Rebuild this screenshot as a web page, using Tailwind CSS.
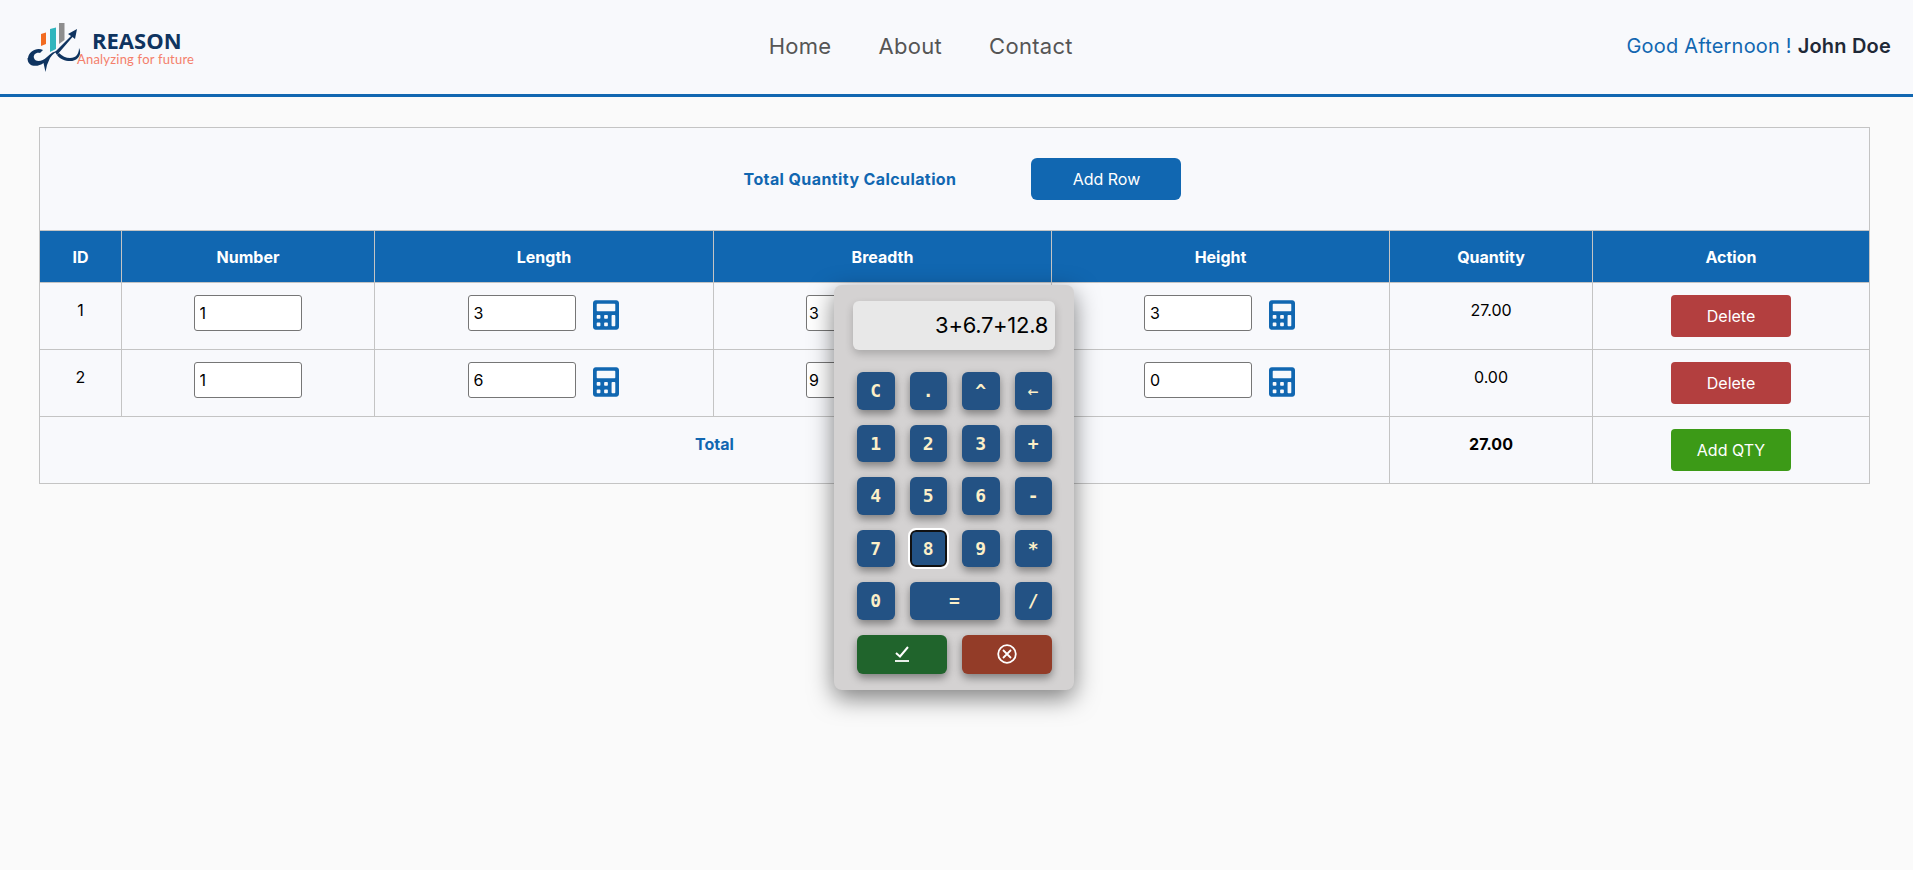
<!DOCTYPE html>
<html lang="en">
<head>
<meta charset="utf-8">
<title>Total Quantity Calculation</title>
<script src="https://cdn.jsdelivr.net/npm/@tailwindcss/browser@4"></script>
</head>
<body class="relative h-[870px] overflow-hidden bg-[#fafafa] font-['Inter',sans-serif] text-black">
<header class="h-[97px] bg-[#f8f9fc] border-b-[3px] border-[#1167b1] flex items-center justify-between pl-[27px] pr-[22px] pb-[2px]">
  <div class="flex items-start w-[300px]">
    <svg class="w-[54px] h-[50px] mt-[1px] shrink-0" viewBox="0 0 54 50">
      <path d="M14 12l5-1.500V22l-5 2z" fill="#f26b21"/>
      <path d="M23 7l6-1.500V27l-6 3z" fill="#2fb5bd"/>
      <path d="M32 1h5.500V18l-5.500 4z" fill="#8e8e8e"/>
      <path d="M28 30L44 14l-3-2 9-5-2 10-2.500-2L30 33z" fill="#0f3460"/>
      <path d="M1 36c1-7 9-11 15-8l-3 3c-4-1-7 2-6 5 1 4 8 4 13-1 4-4 7-6 11-6-3 1-5 3-8 7l-3 7 -1.500 7-2-9c-5 4-16 5-16-5z" fill="#0f3460"/>
      <path d="M52 26c3 5 0 13-9 13-5 0-10-2-13-6l2-2c3 3 7 5 11 5 6 0 9-4 9-10z" fill="#0f3460"/>
    </svg>
    <div class="mt-[7px] -ml-[4px] leading-none">
      <div class="pl-[15px] font-['Open_Sans',sans-serif] font-bold text-[22px] leading-[24px] text-[#0f3460]">REASON</div>
      <div class="-mt-[1px] font-['Lato',sans-serif] text-[13px] leading-[16px] tracking-[0.2px] text-[#f47f6b]">Analyzing for future</div>
    </div>
  </div>
  <nav class="flex gap-[47px] text-[22px] text-[#555555] tracking-[0.3px] ml-[-112px]">
    <a>Home</a><a>About</a><a>Contact</a>
  </nav>
  <div class="text-[20px] tracking-[0.2px] text-[#1167b1] whitespace-nowrap">Good Afternoon ! <span class="font-semibold text-[#1f2937]">John Doe</span></div>
</header>

<main class="pt-[30px] px-[39px]">
  <table class="table-fixed w-[1830px] border-collapse border border-[#c4c4c4] bg-[#f8f9fc] text-[16px]">
    <colgroup>
      <col class="w-[82px]"><col class="w-[253px]"><col class="w-[339px]"><col class="w-[338px]"><col class="w-[338px]"><col class="w-[203px]"><col class="w-[277px]">
    </colgroup>
    <thead>
      <tr class="h-[103px]">
        <th colspan="7" class="border border-[#c4c4c4] font-normal">
          <div class="flex items-center justify-center gap-[75px] pl-[16px]">
            <span class="font-bold text-[16px] tracking-[0.4px] text-[#1167b1]">Total Quantity Calculation</span>
            <button class="w-[150px] h-[42px] rounded-[6px] bg-[#1167b1] text-white text-[16px]">Add Row</button>
          </div>
        </th>
      </tr>
      <tr class="h-[52px] bg-[#1167b1] text-white text-[16px]">
        <th class="border border-[#c4c4c4] font-bold">ID</th>
        <th class="border border-[#c4c4c4] font-bold">Number</th>
        <th class="border border-[#c4c4c4] font-bold">Length</th>
        <th class="border border-[#c4c4c4] font-bold">Breadth</th>
        <th class="border border-[#c4c4c4] font-bold">Height</th>
        <th class="border border-[#c4c4c4] font-bold">Quantity</th>
        <th class="border border-[#c4c4c4] font-bold">Action</th>
      </tr>
    </thead>
    <tbody>
      <tr class="h-[67px] align-top text-center">
        <td class="border border-[#c4c4c4] pt-[15px]">1</td>
        <td class="border border-[#c4c4c4] pt-[12px]"><input value="1" class="w-[108px] h-[36px] bg-white border border-[#767676] rounded-[3px] px-[5px] -ml-[1px]"></td>
        <td class="border border-[#c4c4c4] pt-[12px]">
          <div class="flex items-center justify-center gap-[17px] pr-[2px]"><input value="3" class="w-[108px] h-[36px] bg-white border border-[#767676] rounded-[3px] px-[5px]"><svg class="w-[26px] h-[30px] mt-[3px]" viewBox="0 0 448 512" fill="#1167b1"><path d="M400 0H48C22.400 0 0 22.400 0 48v416c0 25.600 22.400 48 48 48h352c25.600 0 48-22.400 48-48V48C448 22.400 425.600 0 400 0zM128 435c0 6.400-6.400 12.800-12.800 12.800H76.800c-6.400 0-12.800-6.400-12.800-12.800v-38.400c0-6.400 6.400-12.800 12.800-12.800h38.400c6.400 0 12.800 6.400 12.800 12.800V435zm0-128c0 6.400-6.400 12.800-12.800 12.800H76.800c-6.400 0-12.800-6.400-12.800-12.800v-38.400c0-6.400 6.400-12.800 12.800-12.800h38.400c6.400 0 12.800 6.400 12.800 12.800V307zm128 128c0 6.400-6.400 12.800-12.800 12.800h-38.400c-6.400 0-12.800-6.400-12.800-12.800v-38.400c0-6.400 6.400-12.800 12.800-12.800h38.400c6.400 0 12.800 6.400 12.800 12.800V435zm0-128c0 6.400-6.400 12.800-12.800 12.800h-38.400c-6.400 0-12.800-6.400-12.800-12.800v-38.400c0-6.400 6.400-12.800 12.800-12.800h38.400c6.400 0 12.800 6.400 12.800 12.800V307zm128 128c0 6.400-6.400 12.800-12.800 12.800h-38.400c-6.400 0-12.800-6.400-12.800-12.800V268.800c0-6.400 6.400-12.800 12.800-12.800h38.400c6.400 0 12.800 6.400 12.800 12.800V435zm0-256c0 6.400-6.400 12.800-12.800 12.800H76.800c-6.400 0-12.800-6.400-12.800-12.800V76.800C64 70.400 70.400 64 76.800 64h294.400c6.400 0 12.800 6.400 12.800 12.800V179z"/></svg></div>
        </td>
        <td class="border border-[#c4c4c4] pt-[12px]">
          <div class="flex items-center justify-center gap-[17px] pr-[2px]"><input value="3" class="w-[108px] h-[36px] bg-white border border-[#767676] rounded-[3px] px-[2px]"><svg class="w-[26px] h-[30px] mt-[3px]" viewBox="0 0 448 512" fill="#1167b1"><path d="M400 0H48C22.400 0 0 22.400 0 48v416c0 25.600 22.400 48 48 48h352c25.600 0 48-22.400 48-48V48C448 22.400 425.600 0 400 0z"/></svg></div>
        </td>
        <td class="border border-[#c4c4c4] pt-[12px]">
          <div class="flex items-center justify-center gap-[17px] pr-[2px]"><input value="3" class="w-[108px] h-[36px] bg-white border border-[#767676] rounded-[3px] px-[5px]"><svg class="w-[26px] h-[30px] mt-[3px]" viewBox="0 0 448 512" fill="#1167b1"><path d="M400 0H48C22.400 0 0 22.400 0 48v416c0 25.600 22.400 48 48 48h352c25.600 0 48-22.400 48-48V48C448 22.400 425.600 0 400 0zM128 435c0 6.400-6.400 12.800-12.800 12.800H76.800c-6.400 0-12.800-6.400-12.800-12.800v-38.400c0-6.400 6.400-12.800 12.800-12.800h38.400c6.400 0 12.800 6.400 12.800 12.800V435zm0-128c0 6.400-6.400 12.800-12.800 12.800H76.800c-6.400 0-12.800-6.400-12.800-12.800v-38.400c0-6.400 6.400-12.800 12.800-12.800h38.400c6.400 0 12.800 6.400 12.800 12.800V307zm128 128c0 6.400-6.400 12.800-12.800 12.800h-38.400c-6.400 0-12.800-6.400-12.800-12.800v-38.400c0-6.400 6.400-12.800 12.800-12.800h38.400c6.400 0 12.800 6.400 12.800 12.800V435zm0-128c0 6.400-6.400 12.800-12.800 12.800h-38.400c-6.400 0-12.800-6.400-12.800-12.800v-38.400c0-6.400 6.400-12.800 12.800-12.800h38.400c6.400 0 12.800 6.400 12.800 12.800V307zm128 128c0 6.400-6.400 12.800-12.800 12.800h-38.400c-6.400 0-12.800-6.400-12.800-12.800V268.800c0-6.400 6.400-12.800 12.800-12.800h38.400c6.400 0 12.800 6.400 12.800 12.800V435zm0-256c0 6.400-6.400 12.800-12.800 12.800H76.800c-6.400 0-12.800-6.400-12.800-12.800V76.800C64 70.400 70.400 64 76.800 64h294.400c6.400 0 12.800 6.400 12.800 12.800V179z"/></svg></div>
        </td>
        <td class="border border-[#c4c4c4] pt-[15px]">27.00</td>
        <td class="border border-[#c4c4c4] pt-[12px]"><button class="w-[120px] h-[42px] rounded-[4px] bg-[#b33f3f] text-white text-[16px]">Delete</button></td>
      </tr>
      <tr class="h-[67px] align-top text-center">
        <td class="border border-[#c4c4c4] pt-[15px]">2</td>
        <td class="border border-[#c4c4c4] pt-[12px]"><input value="1" class="w-[108px] h-[36px] bg-white border border-[#767676] rounded-[3px] px-[5px] -ml-[1px]"></td>
        <td class="border border-[#c4c4c4] pt-[12px]">
          <div class="flex items-center justify-center gap-[17px] pr-[2px]"><input value="6" class="w-[108px] h-[36px] bg-white border border-[#767676] rounded-[3px] px-[5px]"><svg class="w-[26px] h-[30px] mt-[3px]" viewBox="0 0 448 512" fill="#1167b1"><path d="M400 0H48C22.400 0 0 22.400 0 48v416c0 25.600 22.400 48 48 48h352c25.600 0 48-22.400 48-48V48C448 22.400 425.600 0 400 0zM128 435c0 6.400-6.400 12.800-12.800 12.800H76.800c-6.400 0-12.800-6.400-12.800-12.800v-38.400c0-6.400 6.400-12.800 12.800-12.800h38.400c6.400 0 12.800 6.400 12.800 12.800V435zm0-128c0 6.400-6.400 12.800-12.800 12.800H76.800c-6.400 0-12.800-6.400-12.800-12.800v-38.400c0-6.400 6.400-12.800 12.800-12.800h38.400c6.400 0 12.800 6.400 12.800 12.800V307zm128 128c0 6.400-6.400 12.800-12.800 12.800h-38.400c-6.400 0-12.800-6.400-12.800-12.800v-38.400c0-6.400 6.400-12.800 12.800-12.800h38.400c6.400 0 12.800 6.400 12.800 12.800V435zm0-128c0 6.400-6.400 12.800-12.800 12.800h-38.400c-6.400 0-12.800-6.400-12.800-12.800v-38.400c0-6.400 6.400-12.800 12.800-12.800h38.400c6.400 0 12.800 6.400 12.800 12.800V307zm128 128c0 6.400-6.400 12.800-12.800 12.800h-38.400c-6.400 0-12.800-6.400-12.800-12.800V268.800c0-6.400 6.400-12.800 12.800-12.800h38.400c6.400 0 12.800 6.400 12.800 12.800V435zm0-256c0 6.400-6.400 12.800-12.800 12.800H76.800c-6.400 0-12.800-6.400-12.800-12.800V76.800C64 70.400 70.400 64 76.800 64h294.400c6.400 0 12.800 6.400 12.800 12.800V179z"/></svg></div>
        </td>
        <td class="border border-[#c4c4c4] pt-[12px]">
          <div class="flex items-center justify-center gap-[17px] pr-[2px]"><input value="9" class="w-[108px] h-[36px] bg-white border border-[#767676] rounded-[3px] px-[2px]"><svg class="w-[26px] h-[30px] mt-[3px]" viewBox="0 0 448 512" fill="#1167b1"><path d="M400 0H48C22.400 0 0 22.400 0 48v416c0 25.600 22.400 48 48 48h352c25.600 0 48-22.400 48-48V48C448 22.400 425.600 0 400 0z"/></svg></div>
        </td>
        <td class="border border-[#c4c4c4] pt-[12px]">
          <div class="flex items-center justify-center gap-[17px] pr-[2px]"><input value="0" class="w-[108px] h-[36px] bg-white border border-[#767676] rounded-[3px] px-[5px]"><svg class="w-[26px] h-[30px] mt-[3px]" viewBox="0 0 448 512" fill="#1167b1"><path d="M400 0H48C22.400 0 0 22.400 0 48v416c0 25.600 22.400 48 48 48h352c25.600 0 48-22.400 48-48V48C448 22.400 425.600 0 400 0zM128 435c0 6.400-6.400 12.800-12.800 12.800H76.800c-6.400 0-12.800-6.400-12.800-12.800v-38.400c0-6.400 6.400-12.800 12.800-12.800h38.400c6.400 0 12.800 6.400 12.800 12.800V435zm0-128c0 6.400-6.400 12.800-12.800 12.800H76.800c-6.400 0-12.800-6.400-12.800-12.800v-38.400c0-6.400 6.400-12.800 12.800-12.800h38.400c6.400 0 12.800 6.400 12.800 12.800V307zm128 128c0 6.400-6.400 12.800-12.800 12.800h-38.400c-6.400 0-12.800-6.400-12.800-12.800v-38.400c0-6.400 6.400-12.800 12.800-12.800h38.400c6.400 0 12.800 6.400 12.800 12.800V435zm0-128c0 6.400-6.400 12.800-12.800 12.800h-38.400c-6.400 0-12.800-6.400-12.800-12.800v-38.400c0-6.400 6.400-12.800 12.800-12.800h38.400c6.400 0 12.800 6.400 12.800 12.800V307zm128 128c0 6.400-6.400 12.800-12.800 12.800h-38.400c-6.400 0-12.800-6.400-12.800-12.800V268.800c0-6.400 6.400-12.800 12.800-12.800h38.400c6.400 0 12.800 6.400 12.800 12.800V435zm0-256c0 6.400-6.400 12.800-12.800 12.800H76.800c-6.400 0-12.800-6.400-12.800-12.800V76.800C64 70.400 70.400 64 76.800 64h294.400c6.400 0 12.800 6.400 12.800 12.800V179z"/></svg></div>
        </td>
        <td class="border border-[#c4c4c4] pt-[15px]">0.00</td>
        <td class="border border-[#c4c4c4] pt-[12px]"><button class="w-[120px] h-[42px] rounded-[4px] bg-[#b33f3f] text-white text-[16px]">Delete</button></td>
      </tr>
      <tr class="h-[67px] align-top text-center">
        <td colspan="5" class="border border-[#c4c4c4] pt-[15px] font-bold text-[#1167b1]">Total</td>
        <td class="border border-[#c4c4c4] pt-[15px] font-bold">27.00</td>
        <td class="border border-[#c4c4c4] pt-[12px]"><button class="w-[120px] h-[42px] rounded-[4px] bg-[#3c9a17] text-white text-[16px]">Add QTY</button></td>
      </tr>
    </tbody>
  </table>
</main>

<!-- Floating calculator popup -->
<div class="absolute left-[834px] top-[285px] w-[240px] h-[405px] rounded-[8px] bg-[#d4d2d2] shadow-[0_8px_24px_rgba(0,0,0,0.5)] pt-[16px] px-[19px]">
  <div class="h-[49px] w-[202px] rounded-[6px] bg-[#e8e8e8] shadow-[0_4px_8px_rgba(0,0,0,0.2)] flex items-center justify-end pr-[7px] text-[22px] tracking-[-0.3px]">3+6.7+12.8</div>
  <div class="mt-[22px] ml-[4px] w-[195px] grid grid-cols-4 auto-rows-[37.5px] gap-[15px] font-['DejaVu_Sans_Mono',monospace] font-bold text-[18px] text-[#fdf0c8]">
    <button class="rounded-[6px] bg-[#235284] shadow-[0_4px_8px_rgba(0,0,0,0.4)]">C</button>
    <button class="rounded-[6px] bg-[#235284] shadow-[0_4px_8px_rgba(0,0,0,0.4)]">.</button>
    <button class="rounded-[6px] bg-[#235284] shadow-[0_4px_8px_rgba(0,0,0,0.4)]">^</button>
    <button class="rounded-[6px] bg-[#235284] shadow-[0_4px_8px_rgba(0,0,0,0.4)] font-normal">←</button>
    <button class="rounded-[6px] bg-[#235284] shadow-[0_4px_8px_rgba(0,0,0,0.4)]">1</button>
    <button class="rounded-[6px] bg-[#235284] shadow-[0_4px_8px_rgba(0,0,0,0.4)]">2</button>
    <button class="rounded-[6px] bg-[#235284] shadow-[0_4px_8px_rgba(0,0,0,0.4)]">3</button>
    <button class="rounded-[6px] bg-[#235284] shadow-[0_4px_8px_rgba(0,0,0,0.4)]">+</button>
    <button class="rounded-[6px] bg-[#235284] shadow-[0_4px_8px_rgba(0,0,0,0.4)]">4</button>
    <button class="rounded-[6px] bg-[#235284] shadow-[0_4px_8px_rgba(0,0,0,0.4)]">5</button>
    <button class="rounded-[6px] bg-[#235284] shadow-[0_4px_8px_rgba(0,0,0,0.4)]">6</button>
    <button class="rounded-[6px] bg-[#235284] shadow-[0_4px_8px_rgba(0,0,0,0.4)]">-</button>
    <button class="rounded-[6px] bg-[#235284] shadow-[0_4px_8px_rgba(0,0,0,0.4)]">7</button>
    <button class="rounded-[6px] bg-[#235284] border-[2px] border-[#111111] outline-[2px] outline-white">8</button>
    <button class="rounded-[6px] bg-[#235284] shadow-[0_4px_8px_rgba(0,0,0,0.4)]">9</button>
    <button class="rounded-[6px] bg-[#235284] shadow-[0_4px_8px_rgba(0,0,0,0.4)]">*</button>
    <button class="rounded-[6px] bg-[#235284] shadow-[0_4px_8px_rgba(0,0,0,0.4)]">0</button>
    <button class="col-span-2 rounded-[6px] bg-[#235284] shadow-[0_4px_8px_rgba(0,0,0,0.4)]">=</button>
    <button class="rounded-[6px] bg-[#235284] shadow-[0_4px_8px_rgba(0,0,0,0.4)]">/</button>
    <button class="col-span-2 h-[39px] flex items-center justify-center rounded-[6px] bg-[#20642c] shadow-[0_4px_8px_rgba(0,0,0,0.4)]">
      <svg class="w-[14px] h-[16px]" viewBox="0 0 14 16" fill="none" stroke="#ffffff" stroke-width="2"><path d="M1 7l4 3.500L13 1"/><path d="M0 15h14" stroke-width="1.800"/></svg>
    </button>
    <button class="col-span-2 h-[39px] flex items-center justify-center rounded-[6px] bg-[#933c28] shadow-[0_4px_8px_rgba(0,0,0,0.4)]">
      <svg class="w-[20px] h-[20px]" viewBox="0 0 20 20" fill="none" stroke="#ffffff" stroke-width="1.800"><circle cx="10" cy="10" r="8.800"/><path d="M6 6l8 8M14 6l-8 8"/></svg>
    </button>
  </div>
</div>
</body>
</html>
